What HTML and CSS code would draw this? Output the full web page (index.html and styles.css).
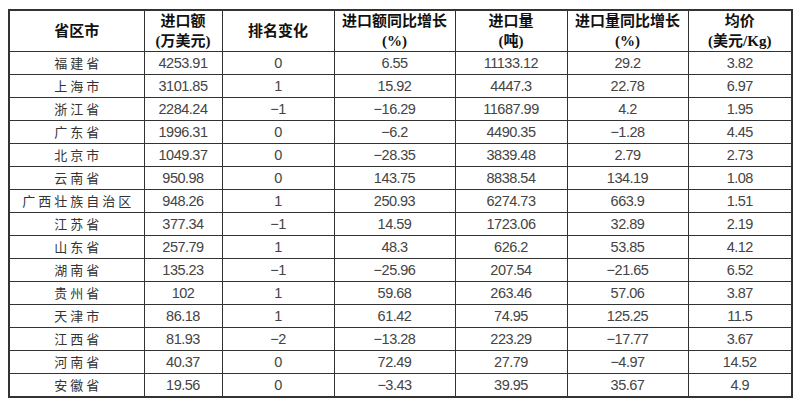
FILE: index.html
```html
<!DOCTYPE html>
<html lang="zh">
<head>
<meta charset="utf-8">
<link rel="stylesheet" href="styles.css">
</head>
<body>
<table class="data">
<colgroup>
<col class="c1"><col class="c2"><col class="c3"><col class="c4"><col class="c5"><col class="c6"><col class="c7">
</colgroup>
<thead>
<tr><th>省区市</th><th>进口额<br>(万美元)</th><th>排名变化</th><th>进口额同比增长<br>(%)</th><th>进口量<br>(吨)</th><th>进口量同比增长<br>(%)</th><th>均价<br>(美元/Kg)</th></tr>
</thead>
<tbody>
<tr><td class="p">福建省</td><td>4253.91</td><td>0</td><td>6.55</td><td>11133.12</td><td>29.2</td><td>3.82</td></tr>
<tr><td class="p">上海市</td><td>3101.85</td><td>1</td><td>15.92</td><td>4447.3</td><td>22.78</td><td>6.97</td></tr>
<tr><td class="p">浙江省</td><td>2284.24</td><td>−1</td><td>−16.29</td><td>11687.99</td><td>4.2</td><td>1.95</td></tr>
<tr><td class="p">广东省</td><td>1996.31</td><td>0</td><td>−6.2</td><td>4490.35</td><td>−1.28</td><td>4.45</td></tr>
<tr><td class="p">北京市</td><td>1049.37</td><td>0</td><td>−28.35</td><td>3839.48</td><td>2.79</td><td>2.73</td></tr>
<tr><td class="p">云南省</td><td>950.98</td><td>0</td><td>143.75</td><td>8838.54</td><td>134.19</td><td>1.08</td></tr>
<tr><td class="p">广西壮族自治区</td><td>948.26</td><td>1</td><td>250.93</td><td>6274.73</td><td>663.9</td><td>1.51</td></tr>
<tr><td class="p">江苏省</td><td>377.34</td><td>−1</td><td>14.59</td><td>1723.06</td><td>32.89</td><td>2.19</td></tr>
<tr><td class="p">山东省</td><td>257.79</td><td>1</td><td>48.3</td><td>626.2</td><td>53.85</td><td>4.12</td></tr>
<tr><td class="p">湖南省</td><td>135.23</td><td>−1</td><td>−25.96</td><td>207.54</td><td>−21.65</td><td>6.52</td></tr>
<tr><td class="p">贵州省</td><td>102</td><td>1</td><td>59.68</td><td>263.46</td><td>57.06</td><td>3.87</td></tr>
<tr><td class="p">天津市</td><td>86.18</td><td>1</td><td>61.42</td><td>74.95</td><td>125.25</td><td>11.5</td></tr>
<tr><td class="p">江西省</td><td>81.93</td><td>−2</td><td>−13.28</td><td>223.29</td><td>−17.77</td><td>3.67</td></tr>
<tr><td class="p">河南省</td><td>40.37</td><td>0</td><td>72.49</td><td>27.79</td><td>−4.97</td><td>14.52</td></tr>
<tr><td class="p">安徽省</td><td>19.56</td><td>0</td><td>−3.43</td><td>39.95</td><td>35.67</td><td>4.9</td></tr>
</tbody>
</table>
</body>
</html>
```

FILE: styles.css
```css
html, body {
  margin: 0;
  padding: 0;
  background: #ffffff;
}
body {
  padding: 9px 0 0 8px;
}
.data {
  border-collapse: collapse;
  table-layout: fixed;
  width: 783px;
  border: 2px solid #333;
}
.c1 { width: 135px; }
.c2 { width: 78px; }
.c3 { width: 112px; }
.c4 { width: 121px; }
.c5 { width: 112px; }
.c6 { width: 121px; }
.c7 { width: 104px; }
.data th, .data td {
  border: 1px solid #333;
  padding: 0;
  text-align: center;
  vertical-align: middle;
}
.data th {
  height: 40px;
  font-family: "Liberation Serif", "Noto Sans CJK SC", serif;
  font-weight: bold;
  font-size: 15px;
  line-height: 20px;
  color: #111;
}
.data td {
  height: 22px;
  font-family: "Liberation Sans", "Noto Sans CJK SC", sans-serif;
  font-size: 14.5px;
  letter-spacing: -0.5px;
  line-height: 22px;
  color: #444;
}
.data td.p {
  font-family: "Noto Sans CJK SC", sans-serif;
  font-size: 13px;
  letter-spacing: 3px;
  text-indent: 3px;
  color: #333;
}
```
